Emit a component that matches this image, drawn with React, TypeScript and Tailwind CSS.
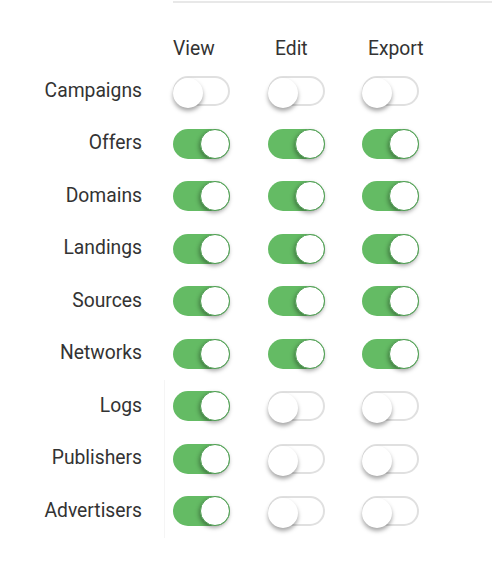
import React from 'react';

type Perm = { name: string; view: boolean; edit: boolean; exp: boolean };

const PERMS: Perm[] = [
  { name: 'Campaigns', view: false, edit: false, exp: false },
  { name: 'Offers', view: true, edit: true, exp: true },
  { name: 'Domains', view: true, edit: true, exp: true },
  { name: 'Landings', view: true, edit: true, exp: true },
  { name: 'Sources', view: true, edit: true, exp: true },
  { name: 'Networks', view: true, edit: true, exp: true },
  { name: 'Logs', view: true, edit: false, exp: false },
  { name: 'Publishers', view: true, edit: false, exp: false },
  { name: 'Advertisers', view: true, edit: false, exp: false },
];

const Toggle: React.FC<{ on: boolean }> = ({ on }) => (
  <div
    className={`relative w-[57px] h-[30px] rounded-full box-border ${
      on ? 'bg-[#64bb64]' : 'bg-white border-2 border-[#e0e0e0]'
    }`}
  >
    <div
      className={`absolute top-0 w-[30px] h-[30px] rounded-full bg-white ${
        on
          ? 'right-0 border border-[#4e9e52] shadow-[-1px_2px_4px_rgba(0,0,0,0.35)]'
          : '-left-[2px] -top-[2px] shadow-[0_3px_4px_rgba(0,0,0,0.35)]'
      }`}
    />
  </div>
);

const App: React.FC = () => {
  return (
    <div className="w-[492px] h-[563px] bg-white text-[#333] font-['Roboto',sans-serif] text-[19.3px]">
      <div className="pt-px">
        <div className="ml-[173px] h-[2px] bg-[#e8e8e8]" />
      </div>
      <div className="mt-[31px] grid grid-cols-[165px_73px_94px_95px]">
        <div className="h-[31px]" />
        <div className="h-[31px] flex items-center pl-[8px]">View</div>
        <div className="h-[31px] flex items-center pl-[37px]">Edit</div>
        <div className="h-[31px] flex items-center pl-[36px]">Export</div>
        {PERMS.map((p, i) => (
          <React.Fragment key={p.name}>
            <div
              className={`h-[52.5px] flex items-center justify-end pr-[22px] border-r ${
                i >= 6 ? 'border-[#f5f5f5]' : 'border-transparent'
              }`}
            >
              {p.name}
            </div>
            <div className="h-[52.5px] flex items-center pl-[8px]"><Toggle on={p.view} /></div>
            <div className="h-[52.5px] flex items-center pl-[30px]"><Toggle on={p.edit} /></div>
            <div className="h-[52.5px] flex items-center pl-[30px]"><Toggle on={p.exp} /></div>
          </React.Fragment>
        ))}
      </div>
    </div>
  );
};

export default App;
